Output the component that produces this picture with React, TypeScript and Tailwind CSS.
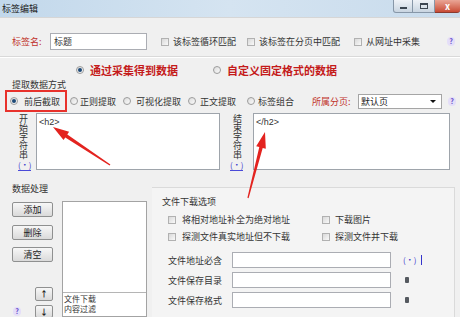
import React from "react";

function Box() {
  return (
    <span className="inline-block h-[8px] w-[8px] shrink-0 border border-[#b1b1b1] bg-linear-to-br from-[#d9d9d9] to-[#f9f9f9]" />
  );
}

function Radio({ on }: { on?: boolean }) {
  return (
    <span className="flex h-[8px] w-[8px] shrink-0 items-center justify-center rounded-full border border-[#9c9c9c] bg-linear-to-br from-[#dcdcdc] to-[#fbfbfb]">
      {on && <span className="h-[4px] w-[4px] rounded-full bg-[#1e4a78]" />}
    </span>
  );
}

function Help() {
  return (
    <span className="flex h-[9px] w-[8px] items-center justify-center rounded-full bg-[#e4def8] text-[7px] font-bold text-[#5b3fc8]">
      ?
    </span>
  );
}

function Dot() {
  return <span className="border-b border-[#4a4ad8] text-[8px] leading-[8px] text-[#3434cc]">(•)</span>;
}

function Btn({ children, className = "" }: { children: React.ReactNode; className?: string }) {
  return (
    <div
      className={`flex items-center justify-center rounded-[2px] border border-[#8f9090] bg-linear-to-b from-[#f7f7f7] to-[#dadada] text-[#222] ${className}`}
    >
      {children}
    </div>
  );
}

function Vertical({ text }: { text: string }) {
  return (
    <div className="pt-[1px] text-[9px] leading-[10px] text-[#333] [writing-mode:vertical-lr]">
      {text}
    </div>
  );
}

export default function App() {
  return (
    <div className="relative h-[317px] w-[460px] overflow-hidden bg-[#f0f0f0] font-['Noto_Sans_CJK_SC','Noto_Sans',sans-serif] text-[9px] leading-none text-[#222]">
      {/* title bar */}
      <div className="flex h-[17px] items-start bg-linear-to-r from-[#c2d8eb] via-[#d5e4f1] to-[#c8dbec]">
        <span className="pl-[2px] pt-[4px] text-[#1a1a1a]">标签编辑</span>
        <div className="ml-auto flex h-[13px]">
          <div className="flex w-[20px] items-end justify-center rounded-bl-[3px] border border-t-0 border-[#8797a8] bg-linear-to-b from-[#eef2f7] to-[#c9d5e1] pb-[3px]">
            <span className="h-[2px] w-[7px] bg-[#3b4652]" />
          </div>
          <div className="flex w-[22px] items-center justify-center border-b border-r border-[#8797a8] bg-linear-to-b from-[#eef2f7] to-[#c9d5e1]">
            <span className="h-[6px] w-[8px] border border-t-2 border-[#3b4652]" />
          </div>
          <div className="flex w-[25px] items-center justify-center rounded-br-[3px] border-b border-[#8a3a2e] bg-linear-to-b from-[#e9a596] to-[#c84a34] text-[9px] font-bold text-white">
            x
          </div>
        </div>
      </div>

      <div className="border-t border-[#d6d6d6]">
        {/* name row */}
        <div className="mt-[15px] flex h-[17px] items-center">
          <span className="ml-[12px] w-[38px] text-[#c0302a]">标签名:</span>
          <div className="flex h-[17px] w-[97px] items-center border border-[#abadb3] bg-white pl-[3px] text-[#333]">
            标题
          </div>
          <div className="ml-[14px] flex w-[86px] items-center gap-[4px] text-[#333]">
            <Box />
            <span>该标签循环匹配</span>
          </div>
          <div className="flex w-[107px] items-center gap-[4px] text-[#333]">
            <Box />
            <span>该标签在分页中匹配</span>
          </div>
          <div className="flex w-[93px] items-center gap-[4px] text-[#333]">
            <Box />
            <span>从网址中采集</span>
          </div>
          <Help />
        </div>

        <div className="mt-[6px] h-px bg-[#d9d9d9]" />
        <div className="h-px bg-white" />

        {/* source radios */}
        <div className="mt-[6px] flex h-[12px] items-center text-[11px] font-bold text-[#c41a1a]">
          <div className="ml-[76px] flex w-[137px] items-center gap-[6px]">
            <Radio on />
            <span>通过采集得到数据</span>
          </div>
          <div className="flex items-center gap-[6px]">
            <Radio />
            <span>自定义固定格式的数据</span>
          </div>
        </div>

        <div className="mt-[4px] h-[10px] pl-[12px] text-[#333]">提取数据方式</div>

        {/* extraction modes */}
        <div className="flex h-[22px] items-center text-[#333]">
          <div className="ml-[5px] flex h-[22px] w-[62px] items-center gap-[6px] border-2 border-[#e8322c] pl-[3px]">
            <Radio on />
            <span>前后截取</span>
          </div>
          <div className="ml-[3px] flex w-[53px] items-center gap-[2px]">
            <Radio />
            <span>正则提取</span>
          </div>
          <div className="flex w-[65px] items-center gap-[5px]">
            <Radio />
            <span>可视化提取</span>
          </div>
          <div className="flex w-[59px] items-center gap-[4px]">
            <Radio />
            <span>正文提取</span>
          </div>
          <div className="flex w-[65px] items-center gap-[3px]">
            <Radio />
            <span>标签组合</span>
          </div>
          <span className="w-[46px] text-[#c0302a]">所属分页:</span>
          <div className="flex h-[15px] w-[84px] items-center border border-[#a5a5a5] bg-white pl-[2px] text-[#222]">
            <span>默认页</span>
            <span className="ml-auto mr-[5px] h-0 w-0 border-x-[3px] border-t-[3px] border-x-transparent border-t-[#111]" />
          </div>
          <span className="ml-[6px]">
            <Help />
          </span>
        </div>

        {/* start / end strings */}
        <div className="mt-[1px] flex h-[57px]">
          <div className="ml-[18px] flex w-[14px] flex-col items-start">
            <Vertical text="开始字符串" />
            <div className="mt-auto mb-[1px]">
              <Dot />
            </div>
          </div>
          <div className="ml-[4px] w-[184px] border border-[#9ea4ab] bg-white pl-[2px] pt-[4px] font-['Liberation_Sans',sans-serif] text-[9px] text-[#333]">
            {"<h2>"}
          </div>
          <div className="ml-[12px] flex w-[14px] flex-col items-start">
            <Vertical text="结束字符串" />
            <div className="mt-auto mb-[1px] -ml-[2px]">
              <Dot />
            </div>
          </div>
          <div className="ml-[7px] w-[197px] border border-[#9ea4ab] bg-white pl-[2px] pt-[4px] font-['Liberation_Sans',sans-serif] text-[9px] text-[#333]">
            {"</h2>"}
          </div>
        </div>

        {/* bottom */}
        <div className="mt-[10px] flex">
          <div className="flex w-[152px] flex-col">
            <div className="mt-[4px] h-[10px] pl-[12px] text-[#333]">数据处理</div>
            <div className="mt-[7px] flex">
              <div className="ml-[12px] flex w-[41px] flex-col">
                <Btn className="mt-[1px] h-[15px]">添加</Btn>
                <Btn className="mt-[8px] h-[15px]">删除</Btn>
                <Btn className="mt-[7px] h-[15px]">清空</Btn>
                <Btn className="mt-[25px] h-[14px] w-[18px] self-end text-[8px] font-bold">↑</Btn>
                <div className="mt-[4px] flex items-end justify-between">
                  <span className="ml-[1px] mb-[2px]">
                    <Help />
                  </span>
                  <Btn className="h-[13px] w-[18px] text-[8px] font-bold">↓</Btn>
                </div>
              </div>
              <div className="ml-[9px] flex h-[116px] w-[85px] flex-col border border-[#a3a3a3] bg-white text-[#333]">
                <div className="h-[91px] border-b border-[#b5b5b5]" />
                <div className="pl-[1px] pt-[1px] text-[8px] leading-[10px]">
                  文件下载
                  <br />
                  内容过滤
                </div>
              </div>
            </div>
          </div>

          <div className="mt-[7px] h-[130px] w-[303px] border-r border-t border-[#dadada] bg-[#f4f4f4] text-[#333]">
            <div className="ml-[10px] mt-[9px] h-[10px]">文件下载选项</div>
            <div className="ml-[16px] mt-[4px] grid grid-cols-[154px_1fr]">
              <div className="flex h-[17px] items-center gap-[6px]">
                <Box />
                <span>将相对地址补全为绝对地址</span>
              </div>
              <div className="flex h-[17px] items-center gap-[5px]">
                <Box />
                <span>下载图片</span>
              </div>
              <div className="flex h-[17px] items-center gap-[6px]">
                <Box />
                <span>探测文件真实地址但不下载</span>
              </div>
              <div className="flex h-[17px] items-center gap-[5px]">
                <Box />
                <span>探测文件并下载</span>
              </div>
            </div>
            <div className="ml-[16px] mt-[7px] flex flex-col gap-[4px]">
              <div className="flex h-[16px] items-center">
                <span className="w-[64px]">文件地址必含</span>
                <div className="h-[16px] w-[159px] border border-[#abadb3] bg-white" />
                <span className="ml-[12px] flex items-center gap-[5px]">
                  <span className="text-[8px] text-[#3434cc]">(•)</span>
                  <span className="h-[10px] w-px bg-[#3434cc]" />
                </span>
              </div>
              <div className="flex h-[16px] items-center">
                <span className="w-[64px]">文件保存目录</span>
                <div className="h-[16px] w-[159px] border border-[#abadb3] bg-white" />
                <span className="ml-[14px] h-[6px] w-[4px] rounded-[1px] bg-[#555a60]" />
              </div>
              <div className="flex h-[16px] items-center">
                <span className="w-[64px]">文件保存格式</span>
                <div className="h-[16px] w-[159px] border border-[#abadb3] bg-white" />
                <span className="ml-[14px] h-[6px] w-[4px] rounded-[1px] bg-[#555a60]" />
              </div>
            </div>
          </div>
        </div>
      </div>

      {/* red annotation arrows */}
      <svg
        className="pointer-events-none absolute left-0 top-0"
        width="460"
        height="317"
        viewBox="0 0 460 317"
      >
        <polygon
          fill="#e3231f"
          points="110.4,164.4 67.3,134.4 69.1,131.7 53,127 63.5,140.1 65.3,137.4 109.6,165.6"
        />
        <polygon
          fill="#e3231f"
          points="248.6,198.2 262.7,147.9 265.8,148.7 265,132 256.2,146.3 259.3,147.1 247.4,197.8"
        />
      </svg>
    </div>
  );
}
